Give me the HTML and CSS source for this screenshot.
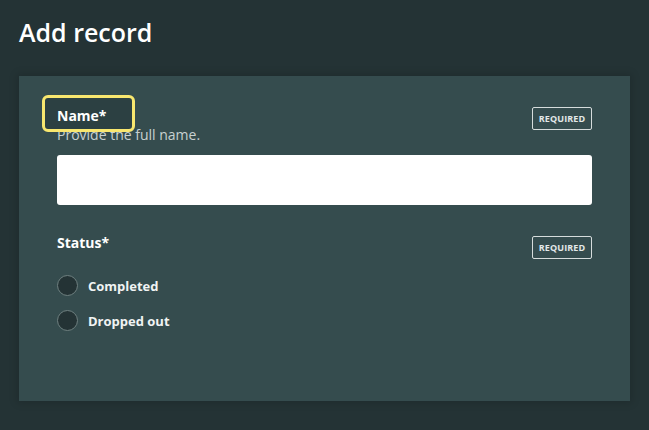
FILE: index.html
```html
<!DOCTYPE html>
<html lang="en">
<head>
<meta charset="utf-8">
<title>Add record</title>
<link rel="stylesheet" href="styles.css">
</head>
<body>
<div class="page">
  <h1 class="title">Add record</h1>
  <form class="panel">
    <div class="field">
      <div class="field-head">
        <div class="field-text">
          <label class="label label-focus" for="name">Name*</label>
          <div class="hint">Provide the full name.</div>
        </div>
        <span class="badge">Required</span>
      </div>
      <input class="input" id="name" type="text">
    </div>
    <div class="field field-status">
      <div class="field-head">
        <div class="field-text">
          <span class="label label-status">Status*</span>
        </div>
        <span class="badge">Required</span>
      </div>
      <div class="radios">
        <label class="radio"><span class="dot"></span><span class="radio-text">Completed</span></label>
        <label class="radio"><span class="dot"></span><span class="radio-text">Dropped out</span></label>
      </div>
    </div>
  </form>
</div>
</body>
</html>
```
FILE: styles.css
```css
* { box-sizing: border-box; }
html, body { margin: 0; padding: 0; }
body {
  background: #243335;
  font-family: "Open Sans", "Noto Sans", sans-serif;
  color: #ffffff;
  width: 649px;
  height: 430px;
  overflow: hidden;
}
.page {
  padding: 14px 19px 0 19px;
}
.title {
  margin: 0 0 26px 0;
  font-size: 25px;
  line-height: 36px;
  font-weight: 600;
  color: #ffffff;
}
.panel {
  width: 611px;
  height: 325px;
  background: #354c4e;
  box-shadow: 0 0 8px 2px rgba(0, 0, 0, 0.15);
  padding: 31px 38px 0 38px;
}
.field-head {
  display: flex;
  justify-content: space-between;
  align-items: flex-start;
}
.field-text {
  display: flex;
  flex-direction: column;
}
.label {
  font-size: 14px;
  line-height: 18px;
  font-weight: 700;
  color: #ffffff;
}
.label-status {
  margin-top: -2px;
}
.label-focus {
  position: relative;
  z-index: 0;
  align-self: flex-start;
}
.label-focus::before {
  content: "";
  position: absolute;
  left: -15px;
  top: -12px;
  width: 87px;
  height: 31px;
  border: 3px solid #f8e76f;
  border-radius: 6px;
  background: #2c4042;
  z-index: -1;
}
.hint {
  font-size: 14px;
  line-height: 20px;
  color: #c8d1d1;
  margin-top: 0;
}
.badge {
  border: 1px solid #d6dcdc;
  border-radius: 2px;
  height: 23px;
  width: 60px;
  display: flex;
  align-items: center;
  justify-content: center;
  font-size: 9px;
  font-weight: 700;
  text-transform: uppercase;
  color: #e3e8e8;
  letter-spacing: 0.1px;
}
.input {
  display: block;
  width: 535px;
  height: 50px;
  margin-top: 10px;
  border: 0;
  border-radius: 3px;
  background: #ffffff;
}
.field-status {
  margin-top: 31px;
}
.radios {
  margin-top: 16px;
  display: flex;
  flex-direction: column;
  gap: 14px;
}
.radio {
  display: flex;
  align-items: center;
  gap: 10px;
}
.dot {
  width: 21px;
  height: 21px;
  border-radius: 50%;
  background: #243335;
  border: 1px solid #6f8080;
}
.radio-text {
  font-size: 13px;
  font-weight: 700;
  color: #f0f3f3;
}
```
